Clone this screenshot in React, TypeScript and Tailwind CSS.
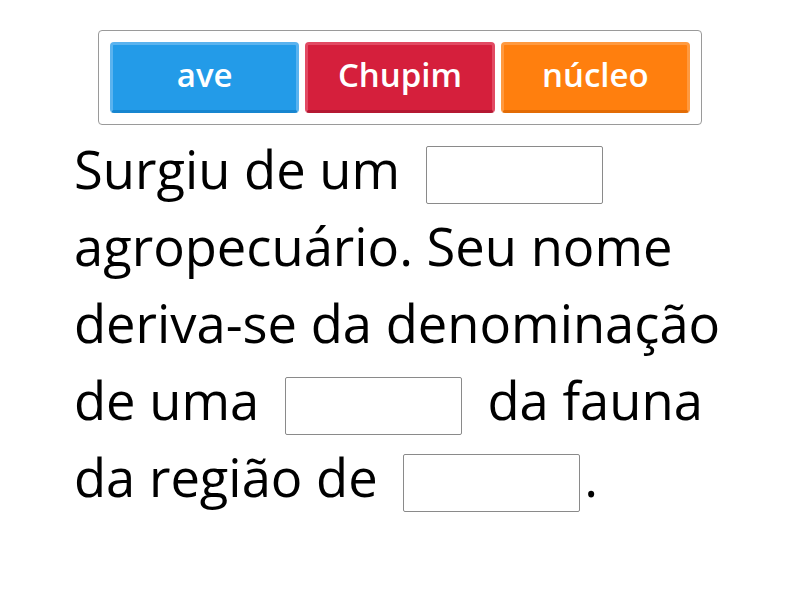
const words = [
  { label: 'ave', cls: 'bg-[#239be8] border-[#5ab3ef] border-b-[#1786d0]' },
  { label: 'Chupim', cls: 'bg-[#d51f3c] border-[#e24a63] border-b-[#b51832]' },
  { label: 'núcleo', cls: 'bg-[#ff7f0e] border-[#ff9a40] border-b-[#e36c05]' },
];

function Blank({ last }: { last?: boolean }) {
  return (
    <span
      className={`inline-block w-[177px] h-[58px] align-middle border border-[#8a8a8a] rounded-[2px] bg-white ml-[12px] ${
        last ? 'mr-[4px]' : 'mr-[12px]'
      }`}
    />
  );
}

export default function App() {
  return (
    <div className="w-[800px] h-[600px] bg-white overflow-hidden" style={{ fontFamily: '"Open Sans", sans-serif' }}>
      <div className="mt-[30px] mx-auto w-[604px] h-[95px] border border-[#9a9a9a] rounded-[4px] flex items-center gap-[6px] px-[11px]">
        {words.map((w) => (
          <div
            key={w.label}
            className={`flex-1 h-[71px] rounded-[4px] border-[3px] flex items-center justify-center pb-[6px] text-white font-semibold text-[33px] ${w.cls}`}
          >
            {w.label}
          </div>
        ))}
      </div>

      <p className="mt-[5px] ml-[74px] w-[670px] text-[52.5px] leading-[77px] text-black">
        Surgiu de um <Blank /> agropecuário. Seu nome deriva-se da denominação de uma <Blank /> da fauna da região de <Blank last />.
      </p>
    </div>
  );
}
